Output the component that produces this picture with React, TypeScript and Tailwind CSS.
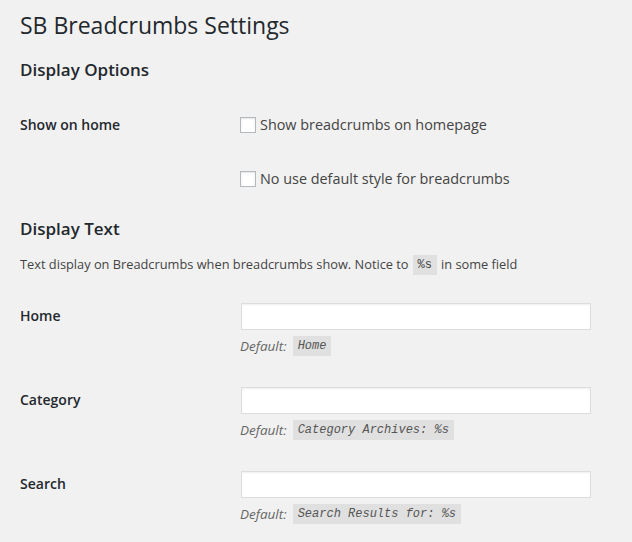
import React from 'react';

const mono = "font-['Liberation_Mono',monospace]";

const Checkbox = ({ label }: { label: string }) => (
  <label className="flex items-center gap-[4px] text-[14.4px] text-[#444]">
    <span className="w-[16px] h-[16px] border border-[#b4b9be] bg-white shadow-[inset_0_1px_2px_rgba(0,0,0,0.1)]" />
    <span>{label}</span>
  </label>
);

const TextRow = ({ label, def, first }: { label: string; def: string; first?: boolean }) => (
  <div className={first ? 'mt-[28px]' : 'mt-[31px]'}>
    <div className="flex items-center h-[27px]">
      <div className="w-[220px] pb-[2px] text-[14px] font-semibold text-[#23282d]">{label}</div>
      <div className="ml-[1px] w-[350px] h-[27px] bg-white border border-[#ddd] shadow-[inset_0_1px_2px_rgba(0,0,0,0.07)]" />
    </div>
    <div className="mt-[6px] ml-[220px] flex items-center h-[20px] text-[13.5px] italic text-[#666]">
      <span>Default:</span>
      <code className={`ml-[6px] h-[20px] px-[5px] flex items-center bg-[#e0e0e0] text-[12px] text-[#555] ${mono}`}>{def}</code>
    </div>
  </div>
);

export default function App() {
  return (
    <div className="min-h-[542px] bg-[#f1f1f1] px-[20px] pt-[10px] font-['Open_Sans',sans-serif] text-[#23282d]">
      <h1 className="h-[30px] flex items-center text-[23px] font-normal">SB Breadcrumbs Settings</h1>
      <h2 className="mt-[15px] h-[30px] flex items-center text-[17px] font-semibold">Display Options</h2>

      <div className="mt-[25px] h-[30px] flex items-center">
        <div className="w-[220px] pb-[1px] text-[14px] font-semibold">Show on home</div>
        <Checkbox label="Show breadcrumbs on homepage" />
      </div>
      <div className="mt-[24px] h-[30px] flex items-center pl-[220px]">
        <Checkbox label="No use default style for breadcrumbs" />
      </div>

      <h2 className="mt-[20px] h-[30px] flex items-center text-[17px] font-semibold">Display Text</h2>
      <p className="mt-[11px] h-[20px] flex items-center text-[12.8px] text-[#444]">
        Text display on Breadcrumbs when breadcrumbs show. Notice to
        <code className={`mx-[4px] h-[20px] px-[5px] flex items-center bg-[#e0e0e0] text-[12px] ${mono}`}>%s</code>
        in some field
      </p>

      <TextRow first label="Home" def="Home" />
      <TextRow label="Category" def="Category Archives: %s" />
      <TextRow label="Search" def="Search Results for: %s" />
    </div>
  );
}
